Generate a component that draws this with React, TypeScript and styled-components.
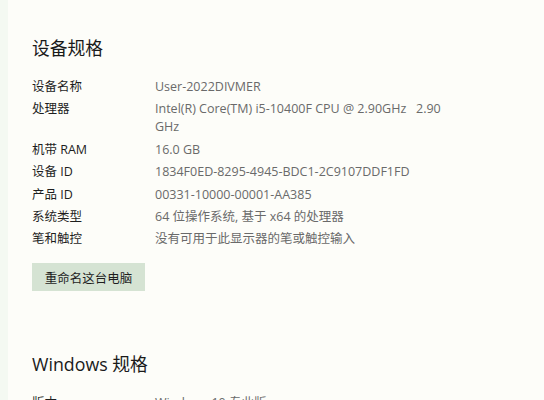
import React from 'react';
import styled, { createGlobalStyle } from 'styled-components';

const GlobalStyle = createGlobalStyle`
  html, body {
    margin: 0;
    padding: 0;
    background: #fdfdf9;
  }
  body {
    font-family: "Segoe UI", "Open Sans", "Noto Sans CJK SC", sans-serif;
    color: #1b1b1b;
    -webkit-font-smoothing: antialiased;
  }
`;

const Window = styled.div`
  display: flex;
  width: 544px;
  height: 400px;
  overflow: hidden;
`;

const EdgeStrip = styled.div`
  width: 8px;
  flex-shrink: 0;
  background: #f4f9f2;
`;

const Content = styled.div`
  flex: 1;
  padding: 34px 0 0 24px;
`;

const SectionTitle = styled.h2<{ $top?: number }>`
  margin: ${(p) => p.$top ?? 0}px 0 0 0;
  font-size: 17.8px;
  font-weight: 400;
  line-height: 28px;
  color: #1a1a1a;
`;

const SpecGrid = styled.dl`
  display: grid;
  grid-template-columns: 123px 290px;
  row-gap: 4.4px;
  margin: 16px 0 0 0;
  font-size: 12.5px;
  line-height: 18px;
`;

const Label = styled.dt`
  margin: 0;
  color: #1e1e1e;
`;

const Value = styled.dd`
  margin: 0;
  color: #6a6a6a;
  white-space: pre-wrap;
`;

const RenameButton = styled.button`
  display: block;
  margin-top: 15px;
  width: 113px;
  height: 28px;
  padding: 0;
  border: none;
  background: #d5e3d3;
  color: #1e1e1e;
  font-family: inherit;
  font-size: 12.5px;
  cursor: pointer;
`;

const deviceSpecs: [string, string][] = [
  ['设备名称', 'User-2022DIVMER'],
  ['处理器', 'Intel(R) Core(TM) i5-10400F CPU @ 2.90GHz   2.90 GHz'],
  ['机带 RAM', '16.0 GB'],
  ['设备 ID', '1834F0ED-8295-4945-BDC1-2C9107DDF1FD'],
  ['产品 ID', '00331-10000-00001-AA385'],
  ['系统类型', '64 位操作系统, 基于 x64 的处理器'],
  ['笔和触控', '没有可用于此显示器的笔或触控输入'],
];

const windowsSpecs: [string, string][] = [['版本', 'Windows 10 专业版']];

const SpecList: React.FC<{ items: [string, string][] }> = ({ items }) => (
  <SpecGrid>
    {items.map(([k, v]) => (
      <React.Fragment key={k}>
        <Label>{k}</Label>
        <Value>{v}</Value>
      </React.Fragment>
    ))}
  </SpecGrid>
);

const App: React.FC = () => (
  <>
    <GlobalStyle />
    <Window>
      <EdgeStrip />
      <Content>
        <SectionTitle>设备规格</SectionTitle>
        <SpecList items={deviceSpecs} />
        <RenameButton>重命名这台电脑</RenameButton>
        <SectionTitle $top={59}>Windows 规格</SectionTitle>
        <SpecList items={windowsSpecs} />
      </Content>
    </Window>
  </>
);

export default App;
